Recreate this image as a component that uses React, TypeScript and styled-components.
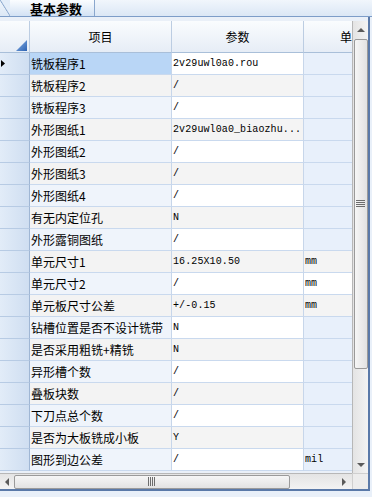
import React from 'react';
import styled, { createGlobalStyle } from 'styled-components';

const GlobalStyle = createGlobalStyle`
    html, body {
        margin: 0;
        padding: 0;
        background: #e9f0f9;
    }
    * {
        box-sizing: border-box;
    }
`;

const CJK = `"SimSun", "Noto Sans CJK SC", "Liberation Sans", sans-serif`;
const MONO = `"Liberation Mono", "Noto Sans CJK SC", monospace`;

const Frame = styled.div`
    width: 372px;
    height: 497px;
    display: flex;
    flex-direction: column;
    overflow: hidden;
    background: #e9f0f9;
    font-family: ${CJK};
    color: #000;
`;

const TabStrip = styled.div`
    height: 17px;
    flex-shrink: 0;
    display: flex;
    background: linear-gradient(#f1f6fc, #dbe7f5);
    border-bottom: 1px solid #7d9dc8;
`;

const TabEdge = styled.div`
    width: 10px;
    height: 16px;
    background: linear-gradient(to top right, transparent 46%, #8aa7cd 50%, #e3edf9 56%);
`;

const Tab = styled.div`
    width: 85px;
    height: 16px;
    display: flex;
    align-items: center;
    padding-left: 20px;
    background: linear-gradient(#fbfdff, #d3e2f4);
    border-right: 1px solid #8aa7cd;
    font-size: 13px;
    font-weight: 700;
    line-height: 13px;
`;

const GridFrame = styled.div`
    flex: 1;
    min-height: 0;
    display: flex;
    flex-direction: column;
    margin: 0 2px 6px 0;
    padding-top: 4px;
    border-right: 2px solid #5a79a8;
    border-bottom: 2px solid #5a79a8;
    background: #eaf0f8;
`;

const Main = styled.div`
    flex: 1;
    min-height: 0;
    display: flex;
`;

const Table = styled.div`
    width: 352px;
    overflow: hidden;
    background: #eaf0f8;
`;

const Grid = styled.div`
    width: 400px;
    display: grid;
    grid-template-columns: 30px 142px 132px 96px;
    grid-template-rows: 32px;
    grid-auto-rows: 22px;
`;

const HeaderCell = styled.div<{ $start?: number }>`
    display: flex;
    align-items: center;
    justify-content: ${p => (p.$start ? 'flex-start' : 'center')};
    padding-left: ${p => p.$start || 0}px;
    position: relative;
    background: linear-gradient(#fafcfe, #e6edf6);
    border-right: 1px solid #bccde2;
    border-bottom: 1px solid #a9bfd9;
    font-size: 12px;
`;

const Corner = styled.svg`
    position: absolute;
    right: 2px;
    bottom: 1px;
`;

const RowHead = styled.div`
    display: flex;
    align-items: center;
    padding-left: 1px;
    background: linear-gradient(to right, #e2ecf8, #cfdef1);
    border-right: 1px solid #9fb6d4;
    border-bottom: 1px solid #b7cbe4;
`;

const Cell = styled.div<{ $bg: string; $mono?: boolean }>`
    display: flex;
    align-items: center;
    padding-left: 1px;
    overflow: hidden;
    white-space: nowrap;
    background: ${p => p.$bg};
    border-right: 1px solid #c7d6ea;
    border-bottom: 1px solid #c9d9ee;
    font-family: ${p => (p.$mono ? MONO : CJK)};
    font-size: ${p => (p.$mono ? '10px' : '12px')};
    letter-spacing: ${p => (p.$mono ? '0.1px' : '0')};
`;

const VScroll = styled.div`
    width: 16px;
    display: flex;
    flex-direction: column;
    align-items: center;
    background: linear-gradient(to right, #e4e4e4, #f3f3f3);
    border-left: 1px solid #b7b7b7;
`;

const ArrowBtn = styled.div<{ $w: number; $h: number }>`
    width: ${p => p.$w}px;
    height: ${p => p.$h}px;
    flex-shrink: 0;
    display: flex;
    align-items: center;
    justify-content: center;
`;

const VThumb = styled.div`
    width: 14px;
    height: 330px;
    margin-top: 1px;
    display: flex;
    align-items: center;
    justify-content: center;
    background: linear-gradient(to right, #f6f6f6, #e2e2e2);
    border: 1px solid #9a9a9a;
    border-radius: 2px;
`;

const Spacer = styled.div`
    flex: 1;
`;

const Grip = styled.div<{ $vertical?: boolean }>`
    width: ${p => (p.$vertical ? '8px' : '9px')};
    height: ${p => (p.$vertical ? '9px' : '8px')};
    background: repeating-linear-gradient(
        ${p => (p.$vertical ? 'to right' : 'to bottom')},
        #6d6d6d 0 1px,
        transparent 1px 2px
    );
`;

const BottomRow = styled.div`
    height: 16px;
    display: flex;
    flex-shrink: 0;
`;

const HScroll = styled.div`
    width: 352px;
    display: flex;
    align-items: center;
    background: linear-gradient(#e4e4e4, #f3f3f3);
    border-top: 1px solid #b7b7b7;
`;

const HThumb = styled.div`
    width: 276px;
    height: 14px;
    margin-left: 1px;
    display: flex;
    align-items: center;
    justify-content: center;
    background: linear-gradient(#f6f6f6, #e2e2e2);
    border: 1px solid #9a9a9a;
    border-radius: 2px;
`;

const CornerBox = styled.div`
    width: 16px;
    background: #ececec;
    border-top: 1px solid #cfcfcf;
    border-left: 1px solid #cfcfcf;
`;

type Row = { name: string; value: string; unit?: string; unitOpen?: boolean };

const rows: Row[] = [
    { name: '铣板程序1', value: '2v29uwl0a0.rou' },
    { name: '铣板程序2', value: '/' },
    { name: '铣板程序3', value: '/' },
    { name: '外形图纸1', value: '2v29uwl0a0_biaozhu...' },
    { name: '外形图纸2', value: '/' },
    { name: '外形图纸3', value: '/' },
    { name: '外形图纸4', value: '/' },
    { name: '有无内定位孔', value: 'N' },
    { name: '外形露铜图纸', value: '/' },
    { name: '单元尺寸1', value: '16.25X10.50', unit: 'mm', unitOpen: true },
    { name: '单元尺寸2', value: '/', unit: 'mm', unitOpen: true },
    { name: '单元板尺寸公差', value: '+/-0.15', unit: 'mm', unitOpen: true },
    { name: '钻槽位置是否不设计铣带', value: 'N' },
    { name: '是否采用粗铣+精铣', value: 'N' },
    { name: '异形槽个数', value: '/' },
    { name: '叠板块数', value: '/' },
    { name: '下刀点总个数', value: '/' },
    { name: '是否为大板铣成小板', value: 'Y' },
    { name: '图形到边公差', value: '/', unit: 'mil' },
];

const Arrow = ({ dir }: { dir: 'up' | 'down' | 'left' | 'right' }) => {
    const pts = {
        up: '0,5 4,1 8,5',
        down: '0,1 8,1 4,5',
        left: '5,0 5,8 1,4',
        right: '1,0 1,8 5,4',
    }[dir];
    const vertical = dir === 'up' || dir === 'down';
    return (
        <svg width={vertical ? 8 : 6} height={vertical ? 6 : 8}>
            <polygon points={pts} fill="#5a5a5a" />
        </svg>
    );
};

const App = () => {
    return (
        <Frame>
            <GlobalStyle />
            <TabStrip>
                <TabEdge />
                <Tab>基本参数</Tab>
            </TabStrip>
            <GridFrame>
                <Main>
                    <Table>
                        <Grid>
                            <HeaderCell>
                                <Corner width="11" height="11">
                                    <defs>
                                        <linearGradient id="tri" x1="0" y1="0" x2="1" y2="1">
                                            <stop offset="0" stopColor="#8cb4e6" />
                                            <stop offset="1" stopColor="#2c62b3" />
                                        </linearGradient>
                                    </defs>
                                    <polygon points="11,0 11,11 0,11" fill="url(#tri)" />
                                </Corner>
                            </HeaderCell>
                            <HeaderCell>项目</HeaderCell>
                            <HeaderCell>参数</HeaderCell>
                            <HeaderCell $start={36}>单</HeaderCell>
                            {rows.map((r, i) => {
                                const odd = i % 2 === 0;
                                const valueBg = odd ? '#ffffff' : '#f4f4f4';
                                const nameBg = i === 0 ? '#b9d6f6' : odd ? '#eff4fb' : '#f3f3f3';
                                const unitBg = r.unitOpen ? valueBg : '#e8f0fb';
                                return (
                                    <React.Fragment key={r.name}>
                                        <RowHead>
                                            {i === 0 && (
                                                <svg width="5" height="7">
                                                    <polygon points="0,0 4,3.5 0,7" fill="#000" />
                                                </svg>
                                            )}
                                        </RowHead>
                                        <Cell $bg={nameBg}>{r.name}</Cell>
                                        <Cell $bg={valueBg} $mono>{r.value}</Cell>
                                        <Cell $bg={unitBg} $mono>{r.unit}</Cell>
                                    </React.Fragment>
                                );
                            })}
                        </Grid>
                    </Table>
                    <VScroll>
                        <ArrowBtn $w={15} $h={17}><Arrow dir="up" /></ArrowBtn>
                        <VThumb><Grip /></VThumb>
                        <Spacer />
                        <ArrowBtn $w={15} $h={17}><Arrow dir="down" /></ArrowBtn>
                    </VScroll>
                </Main>
                <BottomRow>
                    <HScroll>
                        <ArrowBtn $w={13} $h={15}><Arrow dir="left" /></ArrowBtn>
                        <HThumb><Grip $vertical /></HThumb>
                        <Spacer />
                        <ArrowBtn $w={17} $h={15}><Arrow dir="right" /></ArrowBtn>
                    </HScroll>
                    <CornerBox />
                </BottomRow>
            </GridFrame>
        </Frame>
    );
};

export default App;
